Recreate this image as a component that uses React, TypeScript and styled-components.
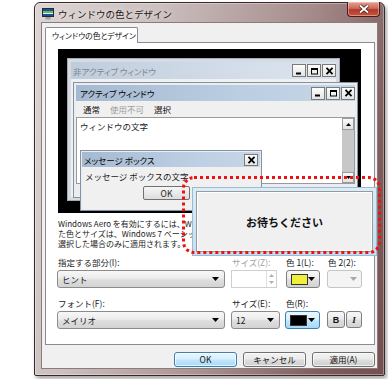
import React from "react";
import styled, { createGlobalStyle } from "styled-components";

const FONT = `"Noto Sans CJK JP", "Noto Sans", sans-serif`;

const GlobalStyle = createGlobalStyle`
  html, body { margin: 0; padding: 0; background: #ffffff; }
  body { font-family: ${FONT}; color: #1a1a1a; }
  #root { width: 388px; height: 379px; overflow: hidden; position: relative; }
`;

const Page = styled.div`
  position: relative;
  width: 388px;
  height: 379px;
  box-sizing: border-box;
  padding: 2px 3px 3px 34px;
  background: #ffffff;
`;

const Window = styled.div`
  width: 351px;
  height: 374px;
  box-sizing: border-box;
  display: flex;
  flex-direction: column;
  padding: 0 6px 6px 6px;
  border: 1px solid #3a2828;
  border-radius: 6px 6px 2px 2px;
  background: linear-gradient(105deg, #ddd5d5 0%, #cbbfbf 28%, #a88f8f 60%, #805e5e 85%, #744f4f 100%);
  box-shadow: 2px 3px 4px rgba(0, 0, 0, 0.35), inset 0 0 0 1px rgba(255, 255, 255, 0.35);
`;

const TitleBar = styled.div`
  height: 19px;
  flex: none;
  display: flex;
  align-items: flex-start;
`;

const AppIcon = styled.svg`
  width: 12px;
  height: 12px;
  margin: 5px 0 0 1px;
  flex: none;
`;

const TitleText = styled.div`
  flex: 1;
  margin: 5px 0 0 4px;
  font-size: 9.5px;
  line-height: 12px;
  color: #1b1313;
  white-space: nowrap;
  text-shadow: 0 0 5px rgba(255, 255, 255, 0.9);
`;

const CloseButton = styled.div`
  width: 33px;
  height: 15px;
  margin: -1px -2px 0 0;
  box-sizing: border-box;
  border: 1px solid #4a1c18;
  border-top: none;
  border-radius: 0 0 4px 4px;
  background: linear-gradient(#e3a293 0%, #cc6a58 45%, #b13a2b 55%, #c4563f 100%);
  display: flex;
  align-items: center;
  justify-content: center;
  box-shadow: inset 0 0 0 1px rgba(255, 220, 210, 0.45);
`;

const Client = styled.div`
  flex: 1;
  display: flex;
  flex-direction: column;
  background: #f0f0f0;
  border: 1px solid #8d7b7b;
  padding: 4px 2px 0 3px;
`;

const TabStrip = styled.div`
  display: flex;
  height: 16px;
  flex: none;
  margin-bottom: -1px;
  position: relative;
  z-index: 1;
`;

const Tab = styled.div`
  width: 93px;
  height: 16px;
  box-sizing: border-box;
  border: 1px solid #898c95;
  border-bottom: none;
  border-radius: 2px 2px 0 0;
  background: #ffffff;
  padding-left: 6px;
  font-size: 7.8px;
  line-height: 15px;
  font-feature-settings: "palt";
  white-space: nowrap;
  overflow: hidden;
  color: #111;
`;

const Panel = styled.div`
  height: 303px;
  flex: none;
  box-sizing: border-box;
  border: 1px solid #898c95;
  background: #ffffff;
  display: flex;
  flex-direction: column;
  padding: 6px 0 0 12px;
`;

const Preview = styled.div`
  position: relative;
  width: 303px;
  height: 164px;
  flex: none;
  background: #000000;
  overflow: hidden;
`;

const MiniWindow = styled.div<{ $left: number; $top: number; $w: number; $h: number; $active?: boolean; $pad: number }>`
  position: absolute;
  left: ${(p) => p.$left}px;
  top: ${(p) => p.$top}px;
  width: ${(p) => p.$w}px;
  height: ${(p) => p.$h}px;
  box-sizing: border-box;
  border: 1px solid ${(p) => (p.$active ? "#8592a0" : "#a3acb6")};
  background: ${(p) => (p.$active ? "#e9edf1" : "#d5dbe1")};
  padding: ${(p) => p.$pad}px;
  display: flex;
  flex-direction: column;
`;

const MiniTitle = styled.div<{ $active?: boolean; $h: number; $pl: number }>`
  height: ${(p) => p.$h}px;
  flex: none;
  display: flex;
  align-items: center;
  padding-left: ${(p) => p.$pl}px;
  font-size: 8.5px;
  line-height: 10px;
  white-space: nowrap;
  font-feature-settings: "palt";
  color: ${(p) => (p.$active ? "#000000" : "#7d8791")};
  background: ${(p) =>
    p.$active
      ? "linear-gradient(to right, #a5b9d1, #bccee2 60%, #c6d6e8)"
      : "linear-gradient(to right, #bfccdb, #d3dde9 60%, #dbe4ee)"};
`;

const CaptionButtons = styled.div`
  margin-left: auto;
  display: flex;
  gap: 1px;
`;

const CaptionButton = styled.div`
  width: 14px;
  height: 13px;
  box-sizing: border-box;
  border: 1px solid #7a7a7a;
  background: linear-gradient(#fdfdfd, #e4e4e4);
  display: flex;
  align-items: center;
  justify-content: center;
`;

const MiniBody = styled.div`
  flex: 1;
  background: #f0f0f0;
`;

const MenuBar = styled.div`
  height: 16px;
  flex: none;
  display: flex;
  align-items: center;
  gap: 10px;
  padding-left: 7px;
  background: #f0f0f0;
  font-size: 8.5px;
  line-height: 10px;
`;

const MenuItem = styled.span<{ $disabled?: boolean }>`
  color: ${(p) => (p.$disabled ? "#9c9c9c" : "#111111")};
`;

const TextArea = styled.div`
  height: 67px;
  flex: none;
  box-sizing: border-box;
  border: 1px solid #9a9a9a;
  background: #ffffff;
  display: flex;
`;

const TextContent = styled.div`
  flex: 1;
  padding: 3px 0 0 3px;
  font-size: 8.5px;
  line-height: 10px;
  white-space: nowrap;
`;

const ScrollBar = styled.div`
  width: 12px;
  flex: none;
  display: flex;
  flex-direction: column;
`;

const ScrollButton = styled.div<{ $h: number }>`
  height: ${(p) => p.$h}px;
  flex: none;
  box-sizing: border-box;
  border: 1px solid #9c9c9c;
  background: linear-gradient(#fafafa, #e2e2e2);
  display: flex;
  align-items: center;
  justify-content: center;
`;

const ScrollTrack = styled.div`
  flex: 1;
  background: #c7c7c7;
`;

const MsgBody = styled.div`
  flex: 1;
  background: #f0f0f0;
  padding: 4px 0 0 3px;
  display: flex;
  flex-direction: column;
`;

const MsgText = styled.div`
  font-size: 8.5px;
  line-height: 10px;
  white-space: nowrap;
`;

const MsgOk = styled.div`
  width: 47px;
  height: 14px;
  margin: 5px 0 0 58px;
  box-sizing: border-box;
  border: 1px solid #707070;
  border-radius: 2px;
  background: linear-gradient(#f6f6f6, #dddddd);
  font-size: 8.5px;
  line-height: 12px;
  text-align: center;
`;

const MsgClose = styled.div`
  width: 14px;
  height: 12px;
  margin: 0 2px 0 auto;
  box-sizing: border-box;
  border: 1px solid #7a7a7a;
  background: linear-gradient(#fdfdfd, #e4e4e4);
  display: flex;
  align-items: center;
  justify-content: center;
`;

const Note = styled.div`
  margin-top: 6px;
  width: 315px;
  overflow: hidden;
  white-space: nowrap;
  font-size: 8px;
  line-height: 10px;
  color: #1a1a1a;
`;

const FormGrid = styled.div<{ $mt: number }>`
  display: grid;
  grid-template-columns: 174px 54px 42px 35px;
  grid-template-rows: 10px 18px;
  row-gap: 3px;
  margin: ${(p) => p.$mt}px 0 0 -1px;
`;

const FieldLabel = styled.div<{ $disabled?: boolean; $ml?: number }>`
  font-size: 8.5px;
  line-height: 10px;
  white-space: nowrap;
  padding-left: ${(p) => 1 + (p.$ml ?? 0)}px;
  color: ${(p) => (p.$disabled ? "#a2a2a2" : "#1a1a1a")};
`;

const Combo = styled.div<{ $w: number }>`
  width: ${(p) => p.$w}px;
  height: 18px;
  box-sizing: border-box;
  border: 1px solid #8b8b8b;
  border-radius: 3px;
  background: linear-gradient(#f7f7f7 0%, #ececec 45%, #dedede 55%, #d3d3d3 100%);
  display: flex;
  align-items: center;
  justify-content: space-between;
  padding: 0 5px 0 4px;
  font-size: 8.5px;
  line-height: 10px;
`;

const SpinBox = styled.div`
  width: 46px;
  height: 18px;
  box-sizing: border-box;
  border: 1px solid #cfcfcf;
  background: #ffffff;
  display: flex;
  justify-content: flex-end;
`;

const SpinArrows = styled.div`
  width: 9px;
  border-left: 1px solid #e0e0e0;
  display: flex;
  flex-direction: column;
  align-items: center;
  justify-content: space-around;
  padding: 1px 0;
`;

const ColorButton = styled.div<{ $w: number; $disabled?: boolean; $focus?: boolean; $ml?: number }>`
  width: ${(p) => p.$w}px;
  height: 18px;
  margin-left: ${(p) => p.$ml ?? 0}px;
  box-sizing: border-box;
  border: 1px solid ${(p) => (p.$disabled ? "#c5c5c5" : p.$focus ? "#3c7fb1" : "#7f7f7f")};
  border-radius: 3px;
  background: ${(p) =>
    p.$disabled
      ? "#f4f4f4"
      : p.$focus
      ? "linear-gradient(#eaf6fd 0%, #d9f0fc 45%, #bee6fd 55%, #a7d9f5 100%)"
      : "linear-gradient(#f7f7f7 0%, #ececec 45%, #dedede 55%, #d3d3d3 100%)"};
  display: flex;
  align-items: center;
  justify-content: space-between;
  padding: 0 4px 0 4px;
`;

const Swatch = styled.div<{ $color: string }>`
  width: 17px;
  height: 11px;
  box-sizing: border-box;
  border: 1px solid #333;
  background: ${(p) => p.$color};
`;

const StyleGroup = styled.div`
  display: flex;
  gap: 1px;
`;

const StyleButton = styled.div<{ $w: number; $italic?: boolean }>`
  width: ${(p) => p.$w}px;
  height: 17px;
  box-sizing: border-box;
  border: 1px solid #7f7f7f;
  border-radius: 3px;
  background: linear-gradient(#f7f7f7 0%, #ececec 45%, #dedede 55%, #d3d3d3 100%);
  display: flex;
  align-items: center;
  justify-content: center;
  font-family: ${(p) => (p.$italic ? `"Liberation Serif", serif` : `"Liberation Sans", sans-serif`)};
  font-size: 9px;
  font-weight: bold;
  font-style: ${(p) => (p.$italic ? "italic" : "normal")};
  color: #111;
`;

const ButtonBar = styled.div`
  margin-top: 7px;
  height: 15px;
  display: flex;
  justify-content: flex-end;
  gap: 6px;
`;

const DialogButton = styled.div<{ $primary?: boolean }>`
  width: 63px;
  height: 15px;
  box-sizing: border-box;
  border: 1px solid ${(p) => (p.$primary ? "#3c7fb1" : "#707070")};
  border-radius: 3px;
  background: ${(p) =>
    p.$primary
      ? "linear-gradient(#eaf6fd 0%, #d9f0fc 45%, #bee6fd 55%, #a7d9f5 100%)"
      : "linear-gradient(#f2f2f2 0%, #ebebeb 45%, #dddddd 55%, #cfcfcf 100%)"};
  box-shadow: inset 0 0 0 1px rgba(255, 255, 255, 0.7);
  font-size: 8.5px;
  line-height: 13px;
  text-align: center;
  color: #111;
`;

const WaitPopup = styled.div`
  position: absolute;
  left: 192px;
  top: 187px;
  width: 185px;
  height: 69px;
  box-sizing: border-box;
  border: 1px solid #9dbad0;
  background: linear-gradient(#d9ecf8, #c3e0f3);
  padding: 3px;
  display: flex;
`;

const WaitInner = styled.div`
  flex: 1;
  border: 1px solid #9a9a9a;
  background: #f0f0f0;
  box-shadow: inset 0 0 0 1px #ffffff;
  display: flex;
  align-items: center;
  justify-content: center;
  font-size: 11px;
  font-weight: bold;
  color: #111;
`;

const Highlight = styled.div`
  position: absolute;
  left: 182px;
  top: 176px;
  width: 199px;
  height: 78px;
  box-sizing: border-box;
  border: 3px dotted #ee1111;
  border-radius: 12px;
  pointer-events: none;
`;

const Arrow = ({ color = "#000", up = false, w = 7, h = 4 }: { color?: string; up?: boolean; w?: number; h?: number }) => (
  <svg width={w} height={h} viewBox={`0 0 ${w} ${h}`}>
    <path d={up ? `M0 ${h} L${w / 2} 0 L${w} ${h} Z` : `M0 0 L${w} 0 L${w / 2} ${h} Z`} fill={color} />
  </svg>
);

const CapGlyph = ({ kind }: { kind: "min" | "max" | "close" }) => (
  <svg width="9" height="8" viewBox="0 0 9 8">
    {kind === "min" && <rect x="1" y="5.5" width="5" height="2" fill="#000" />}
    {kind === "max" && (
      <>
        <rect x="1.5" y="1.5" width="6" height="5.5" fill="none" stroke="#000" strokeWidth="1" />
        <rect x="1" y="1" width="7" height="2" fill="#000" />
      </>
    )}
    {kind === "close" && <path d="M1.5 0.8 L7.5 7.2 M7.5 0.8 L1.5 7.2" stroke="#000" strokeWidth="1.8" />}
  </svg>
);

const Caption = () => (
  <CaptionButtons>
    <CaptionButton>
      <CapGlyph kind="min" />
    </CaptionButton>
    <CaptionButton>
      <CapGlyph kind="max" />
    </CaptionButton>
    <CaptionButton>
      <CapGlyph kind="close" />
    </CaptionButton>
  </CaptionButtons>
);

export default function App() {
  return (
    <Page>
      <GlobalStyle />
      <Window>
        <TitleBar>
          <AppIcon viewBox="0 0 12 12">
            <rect x="0.5" y="0.5" width="11" height="8" fill="#1f4f9a" stroke="#2a2a2a" strokeWidth="1" />
            <rect x="1" y="3" width="10" height="2" fill="#5fbf4a" />
            <rect x="1" y="5" width="10" height="1" fill="#d8f0ff" />
            <rect x="3.5" y="9" width="5" height="2.5" fill="#9aa3ad" />
          </AppIcon>
          <TitleText>ウィンドウの色とデザイン</TitleText>
          <CloseButton>
            <svg width="12" height="10" viewBox="0 0 12 10">
              <path d="M2 1.5 L10 8.5 M10 1.5 L2 8.5" stroke="#4a1a14" strokeWidth="3.4" />
              <path d="M2 1.5 L10 8.5 M10 1.5 L2 8.5" stroke="#ffffff" strokeWidth="1.8" />
            </svg>
          </CloseButton>
        </TitleBar>
        <Client>
          <TabStrip>
            <Tab>ウィンドウの色とデザイン</Tab>
          </TabStrip>
          <Panel>
            <Preview>
              <MiniWindow $left={9} $top={9} $w={273} $h={143} $pad={3}>
                <MiniTitle $h={17} $pl={2}>
                  非アクティブ ウィンドウ
                  <Caption />
                </MiniTitle>
                <MiniBody />
              </MiniWindow>
              <MiniWindow $left={15} $top={33} $w={285} $h={116} $pad={2} $active>
                <MiniTitle $h={16} $pl={4} $active>
                  アクティブ ウィンドウ
                  <Caption />
                </MiniTitle>
                <MenuBar>
                  <MenuItem>通常</MenuItem>
                  <MenuItem $disabled>使用不可</MenuItem>
                  <MenuItem>選択</MenuItem>
                </MenuBar>
                <TextArea>
                  <TextContent>ウィンドウの文字</TextContent>
                  <ScrollBar>
                    <ScrollButton $h={12}>
                      <Arrow up w={5} h={3} />
                    </ScrollButton>
                    <ScrollTrack />
                    <ScrollButton $h={11}>
                      <Arrow w={5} h={3} />
                    </ScrollButton>
                  </ScrollBar>
                </TextArea>
              </MiniWindow>
              <MiniWindow $left={22} $top={101} $w={182} $h={61} $pad={1} $active>
                <MiniTitle $h={15} $pl={2} $active>
                  メッセージ ボックス
                  <MsgClose>
                    <CapGlyph kind="close" />
                  </MsgClose>
                </MiniTitle>
                <MsgBody>
                  <MsgText>メッセージ ボックスの文字</MsgText>
                  <MsgOk>OK</MsgOk>
                </MsgBody>
              </MiniWindow>
            </Preview>
            <Note>
              Windows Aero を有効にするには、Windows 7 テーマを選択します。ここで選択し
              <br />
              た色とサイズは、Windows 7 ベーシック テーマまたはハイ コントラスト テーマを
              <br />
              選択した場合のみに適用されます。
            </Note>
            <FormGrid $mt={8}>
              <FieldLabel>指定する部分(I):</FieldLabel>
              <FieldLabel $disabled>サイズ(Z):</FieldLabel>
              <FieldLabel>色 1(L):</FieldLabel>
              <FieldLabel>色 2(2):</FieldLabel>
              <Combo $w={168}>
                ヒント
                <Arrow />
              </Combo>
              <SpinBox>
                <SpinArrows>
                  <Arrow up color="#b0b0b0" w={5} h={3} />
                  <Arrow color="#b0b0b0" w={5} h={3} />
                </SpinArrows>
              </SpinBox>
              <ColorButton $w={34} $ml={1}>
                <Swatch $color="#f0f03a" />
                <Arrow />
              </ColorButton>
              <ColorButton $w={35} $disabled>
                <span />
                <Arrow color="#a8a8a8" />
              </ColorButton>
            </FormGrid>
            <FormGrid $mt={10}>
              <FieldLabel>フォント(F):</FieldLabel>
              <FieldLabel>サイズ(E):</FieldLabel>
              <FieldLabel>色(R):</FieldLabel>
              <span />
              <Combo $w={168}>
                メイリオ
                <Arrow />
              </Combo>
              <Combo $w={49}>
                12
                <Arrow />
              </Combo>
              <ColorButton $w={35} $focus>
                <Swatch $color="#000000" />
                <Arrow />
              </ColorButton>
              <StyleGroup>
                <StyleButton $w={18}>B</StyleButton>
                <StyleButton $w={16} $italic>
                  I
                </StyleButton>
              </StyleGroup>
            </FormGrid>
          </Panel>
          <ButtonBar>
            <DialogButton $primary>OK</DialogButton>
            <DialogButton>キャンセル</DialogButton>
            <DialogButton>適用(A)</DialogButton>
          </ButtonBar>
        </Client>
      </Window>
      <WaitPopup>
        <WaitInner>お待ちください</WaitInner>
      </WaitPopup>
      <Highlight />
    </Page>
  );
}
